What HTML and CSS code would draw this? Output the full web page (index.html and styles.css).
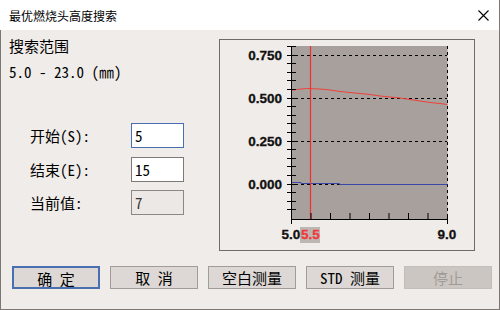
FILE: index.html
```html
<!DOCTYPE html>
<html lang="zh-CN">
<head>
    <meta charset="UTF-8">
    <title>最优燃烧头高度搜索</title>
    <link rel="stylesheet" href="styles.css">
</head>
<body>
    <div class="window">
        <div class="titlebar">
            <span class="title">最优燃烧头高度搜索</span>
            <svg class="close" width="11" height="11" viewBox="0 0 11 11">
                <path d="M0.5 0.5 L10.5 10.5 M10.5 0.5 L0.5 10.5" stroke="#000" stroke-width="1.1" fill="none"/>
            </svg>
        </div>

        <div class="content">
            <div class="main">
                <div class="range">
                    <div class="range-title">搜索范围</div>
                    <div class="range-value">5.0 - 23.0 (㎜)</div>

                    <div class="form">
                        <label class="form-label">开始(S):</label>
                        <input class="field focused" type="text" value="5">
                        <label class="form-label">结束(E):</label>
                        <input class="field" type="text" value="15">
                        <label class="form-label">当前值:</label>
                        <input class="field" type="text" value="7" disabled>
                    </div>
                </div>

                <div class="chart-panel">
                    <svg class="chart" width="254" height="210" viewBox="0 0 254 210">
                        <!-- plot area -->
                        <rect x="72" y="6" width="155.5" height="173" fill="#a8a09d"/>

                        <!-- grid -->
                        <g stroke="#000" stroke-width="1" stroke-dasharray="3 3" fill="none">
                            <line x1="75" y1="15.5" x2="227" y2="15.5"/>
                            <line x1="75" y1="58.5" x2="227" y2="58.5"/>
                            <line x1="75" y1="101.5" x2="227" y2="101.5"/>
                            <line x1="75" y1="144.5" x2="227" y2="144.5"/>
                            <line x1="227.5" y1="6" x2="227.5" y2="179"/>
                        </g>

                        <!-- curves -->
                        <polyline fill="none" stroke="#3a48a6" stroke-width="1"
                            points="71.5,142.5 81,142.5 81,143.5 119.5,143.5 119.5,144.5 227.5,144.5"/>
                        <polyline fill="none" stroke="#f0403a" stroke-width="1"
                            points="71.5,50.5 76.5,49.5 86.5,48.5 100,49 110,50 120,51.5 130,52.5 140,53.5 150,54.5 160,56 170,57 180,58 190,59.5 200,61 210,62.5 220,63.5 227.5,64.5"/>

                        <!-- cursor -->
                        <line x1="90.5" y1="6" x2="90.5" y2="179" stroke="#f03030" stroke-width="1.2"/>

                        <!-- axes -->
                        <g stroke="#000" stroke-width="1" fill="none">
                            <line x1="71.5" y1="6" x2="71.5" y2="184"/>
                            <line x1="71.5" y1="179.5" x2="227.5" y2="179.5"/>
                            <line x1="227.5" y1="174" x2="227.5" y2="184"/>
                            <path d="M67 6.5H76 M67 15.5H76 M67 23.5H76 M67 32.5H76 M67 40.5H76 M67 49.5H76 M67 58.5H76 M67 66.5H76 M67 75.5H76 M67 83.5H76 M67 92.5H76 M67 101.5H76 M67 109.5H76 M67 118.5H76 M67 126.5H76 M67 135.5H76 M67 144.5H76 M67 152.5H76 M67 161.5H76 M67 169.5H76"/>
                            <path d="M91 173V179 M110.5 173V179 M130 173V179 M149.5 173V179 M169 173V179 M188.5 173V179 M208 173V179"/>
                        </g>

                        <!-- labels -->
                        <g class="axis-label" text-anchor="end">
                            <text x="62" y="19.9">0.750</text>
                            <text x="62" y="62.9">0.500</text>
                            <text x="62" y="105.9">0.250</text>
                            <text x="62" y="148.9">0.000</text>
                        </g>
                        <rect x="80" y="187" width="20" height="16" fill="#bdb7b4"/>
                        <g class="axis-label" text-anchor="middle">
                            <text x="71" y="199">5.0</text>
                            <text class="cursor-label" x="90.5" y="199">5.5</text>
                            <text x="227" y="199">9.0</text>
                        </g>
                    </svg>
                </div>
            </div>

            <div class="buttons">
                <button class="btn default">确 定</button>
                <button class="btn">取 消</button>
                <button class="btn">空白测量</button>
                <button class="btn">STD 测量</button>
                <button class="btn" disabled>停止</button>
            </div>
        </div>
    </div>
</body>
</html>
```

FILE: styles.css
```css
body {
    margin: 0;
    width: 500px;
    height: 310px;
    overflow: hidden;
    font-family: "Noto Sans Mono CJK SC", "Liberation Mono", "Noto Sans CJK SC", monospace;
    color: #000;
}

.window {
    width: 500px;
    height: 310px;
    box-sizing: border-box;
    background: #f0ece9;
    border-right: 1px solid #7d7774;
    border-bottom: 1px solid #7d7774;
    display: flex;
    flex-direction: column;
}

.titlebar {
    height: 30px;
    flex-shrink: 0;
    background: #fff;
    display: flex;
    align-items: center;
    justify-content: space-between;
    padding: 0 10px 0 9px;
}

.title {
    font-family: "Noto Sans CJK SC", sans-serif;
    font-size: 12px;
}

.content {
    flex: 1;
    border-left: 1px solid #7d7774;
}

.main {
    display: flex;
    height: 236px;
}

.range {
    width: 218px;
    padding: 6px 0 0 8px;
    box-sizing: border-box;
    font-size: 15px;
}

.range-title,
.range-value {
    line-height: 20px;
}

.range-value {
    margin-top: 6px;
}

.form {
    margin-top: 41px;
    padding-left: 21px;
    display: grid;
    grid-template-columns: 101px 53px;
    grid-auto-rows: 25px;
    row-gap: 8.5px;
    align-items: center;
}

.form-label {
    font-size: 15px;
}

.field {
    width: 53px;
    height: 25px;
    box-sizing: border-box;
    margin: 0;
    padding: 0 3px;
    border: 1px solid #7f7976;
    background: #fff;
    font-family: inherit;
    font-size: 15px;
    color: #000;
    outline: none;
}

.field.focused {
    border-color: #4a6fb0;
}

.field:disabled {
    background: #ece8e5;
    color: #333;
    -webkit-text-fill-color: #333;
    opacity: 1;
    border-color: #8d8784;
}

.chart-panel {
    margin-top: 9px;
    width: 256px;
    height: 212px;
    box-sizing: border-box;
    border: 1px solid #716b68;
}

.chart {
    display: block;
}

.axis-label {
    font-family: "Liberation Sans", Arial, sans-serif;
    font-size: 13.5px;
    font-weight: bold;
    fill: #111;
    stroke: #111;
    stroke-width: 0.3;
}

.cursor-label {
    fill: #f03a3a;
    stroke: #f03a3a;
}

.buttons {
    display: flex;
    gap: 10px;
    padding-left: 11px;
}

.btn {
    width: 88px;
    height: 23px;
    box-sizing: border-box;
    margin: 0;
    padding: 0;
    border: 1px solid #a29c99;
    background: #ddd8d5;
    font-family: inherit;
    font-size: 15px;
    color: #000;
}

.btn.default {
    border: 2px solid #4a6fb0;
}

.btn:disabled {
    background: #ccc6c3;
    color: #a19b98;
    border-color: #c4beba;
}
```
